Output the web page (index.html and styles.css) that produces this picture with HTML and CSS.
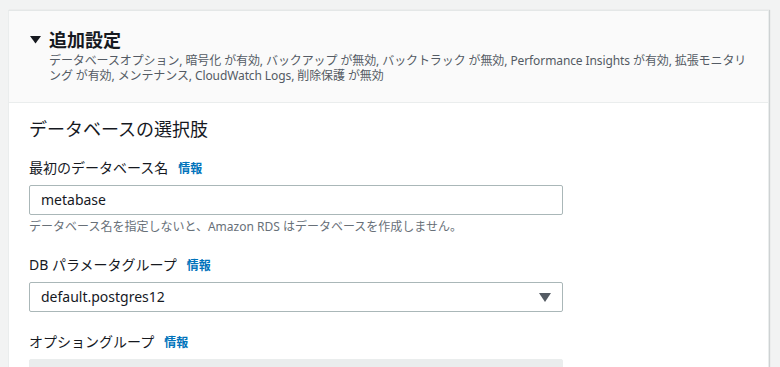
FILE: index.html
```html
<!DOCTYPE html>
<html lang="ja">
<head>
    <meta charset="UTF-8">
    <meta name="viewport" content="width=device-width, initial-scale=1.0">
    <title>追加設定</title>
    <link rel="stylesheet" href="styles.css">
</head>
<body>

    <div class="card">
        <div class="card-header">
            <div class="header-title">
                <svg class="caret" width="11" height="8" viewBox="0 0 11 8"><polygon points="0,0 11,0 5.5,7.5" fill="#16191f"/></svg>
                <h1>追加設定</h1>
            </div>
            <p class="summary">
                <span class="summary-line">データベースオプション, 暗号化 が有効, バックアップ が無効, バックトラック が無効, Performance Insights が有効, 拡張モニタリ</span>
                <span class="summary-line">ング が有効, メンテナンス, CloudWatch Logs, 削除保護 が無効</span>
            </p>
        </div>

        <div class="card-body">
            <h2 class="section-title">データベースの選択肢</h2>

            <div class="field">
                <label class="field-label">最初のデータベース名<a class="info" href="#">情報</a></label>
                <div class="input">metabase</div>
                <p class="hint">データベース名を指定しないと、Amazon RDS はデータベースを作成しません。</p>
            </div>

            <div class="field">
                <label class="field-label">DB パラメータグループ<a class="info" href="#">情報</a></label>
                <div class="input select">
                    <span>default.postgres12</span>
                    <svg width="12" height="9" viewBox="0 0 12 9"><polygon points="0,0 12,0 6,9" fill="#545b64"/></svg>
                </div>
            </div>

            <div class="field">
                <label class="field-label">オプショングループ<a class="info" href="#">情報</a></label>
                <div class="input select disabled"></div>
            </div>
        </div>
    </div>

</body>
</html>
```

FILE: styles.css
```css
body {
    font-family: "Noto Sans", "Noto Sans CJK JP", sans-serif;
    margin: 0;
    padding: 10px 11px 0 8px;
    background-color: #f2f3f3;
    color: #16191f;
    height: 367px;
    box-sizing: border-box;
    overflow: hidden;
}
.card {
    background-color: #fff;
    border: 1px solid #eaeded;
    border-top-color: #e4e7e7;
    border-bottom: none;
    box-shadow: 1px 0 1px 0 rgba(0,28,36,0.15);
    height: 100%;
    box-sizing: border-box;
    overflow: hidden;
}
.card-header {
    background-color: #fafafa;
    border-bottom: 1px solid #eaeded;
    padding: 17px 20px 20px 21px;
}
.header-title {
    display: flex;
    align-items: center;
    gap: 8px;
}
.header-title h1 {
    margin: 0;
    font-size: 18px;
    line-height: 24px;
    font-weight: 700;
}
.summary {
    margin: 1px 0 0 19px;
    font-size: 12px;
    color: #545b64;
    white-space: nowrap;
    letter-spacing: -0.1px;
}
.summary-line {
    display: block;
    height: 14.5px;
    line-height: 15px;
    overflow: visible;
}
.card-body {
    padding: 14px 20px 0 20px;
}
.section-title {
    margin: 0;
    font-size: 18px;
    line-height: 24px;
    font-weight: 400;
}
.field {
    width: 534px;
    margin-top: 17px;
}
.field + .field {
    margin-top: 20px;
}
.field-label {
    display: block;
    font-size: 14px;
    line-height: 20px;
}
.info {
    margin-left: 10px;
    font-size: 12px;
    font-weight: 700;
    color: #0073bb;
    text-decoration: none;
}
.input {
    margin-top: 6px;
    height: 30px;
    box-sizing: border-box;
    border: 1px solid #aab7b8;
    border-radius: 2px;
    padding: 0 11px;
    font-size: 14px;
    line-height: 28px;
    display: flex;
    align-items: center;
    justify-content: space-between;
}
.hint {
    margin: 4px 0 0;
    font-size: 12px;
    line-height: 16px;
    color: #687078;
}
.disabled {
    background-color: #eaeded;
    border-color: #eaeded;
}
```
